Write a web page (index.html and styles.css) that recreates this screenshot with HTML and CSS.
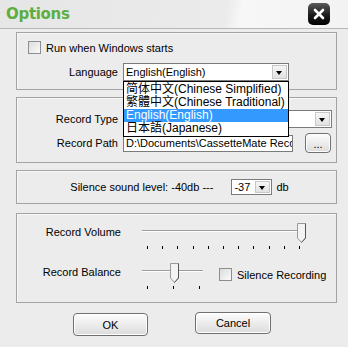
FILE: index.html
```html
<!DOCTYPE html>
<html lang="en">

<head>
  <meta charset="UTF-8">
  <title>Options</title>
  <link rel="stylesheet" href="styles.css">
</head>

<body>
  <div class="window">

    <div class="titlebar">
      <span class="title">Options</span>
      <span class="close">
        <svg width="22" height="22" viewBox="0 0 22 22">
          <path d="M7 7 L15 15 M15 7 L7 15" stroke="#fff" stroke-width="2.6" stroke-linecap="round" />
        </svg>
      </span>
    </div>

    <div class="content">

      <!-- General -->
      <div class="group group-general">
        <div class="check-row">
          <span class="checkbox"></span>
          <span>Run when Windows starts</span>
        </div>
        <div class="field-row lang-row">
          <span class="label">Language</span>
          <div class="combo combo-lang">
            <span class="combo-text">English(English)</span>
            <span class="arrow"></span>
            <ul class="dropdown">
              <li>简体中文(Chinese Simplified)</li>
              <li>繁體中文(Chinese Traditional)</li>
              <li class="selected">English(English)</li>
              <li>日本語(Japanese)</li>
            </ul>
          </div>
        </div>
      </div>

      <!-- Recording -->
      <div class="group group-record">
        <div class="field-row">
          <span class="label">Record Type</span>
          <div class="combo combo-type">
            <span class="arrow"></span>
          </div>
        </div>
        <div class="field-row path-row">
          <span class="label">Record Path</span>
          <div class="path-input"><span>D:\Documents\CassetteMate Recor</span></div>
          <button class="btn btn-browse">...</button>
        </div>
      </div>

      <!-- Silence -->
      <div class="group group-silence">
        <span>Silence sound level: -40db ---</span>
        <div class="combo combo-level">
          <span class="combo-text">-37</span>
          <span class="arrow"></span>
        </div>
        <span>db</span>
      </div>

      <!-- Volume -->
      <div class="group group-volume">
        <div class="slider-row">
          <span class="slider-label">Record Volume</span>
          <div class="slider slider-volume">
            <div class="track"></div>
            <svg class="thumb thumb-volume" width="9" height="20" viewBox="0 0 9 20">
              <path d="M0.5 0.5 H8.5 V15 L4.5 19.5 L0.5 15 Z" fill="#f3f3f3" stroke="#9a9a9a" />
              <path d="M8.5 0.5 V15 L4.5 19.5" fill="none" stroke="#555" />
            </svg>
            <div class="ticks">
              <i></i><i></i><i></i><i></i><i></i><i></i><i></i><i></i><i></i><i></i><i></i>
            </div>
          </div>
        </div>
        <div class="slider-row">
          <span class="slider-label">Record Balance</span>
          <div class="slider slider-balance">
            <div class="track"></div>
            <svg class="thumb thumb-balance" width="9" height="20" viewBox="0 0 9 20">
              <path d="M0.5 0.5 H8.5 V15 L4.5 19.5 L0.5 15 Z" fill="#f3f3f3" stroke="#9a9a9a" />
              <path d="M8.5 0.5 V15 L4.5 19.5" fill="none" stroke="#555" />
            </svg>
            <div class="ticks">
              <i></i><i></i><i></i>
            </div>
          </div>
          <div class="check-row silence-check">
            <span class="checkbox"></span>
            <span>Silence Recording</span>
          </div>
        </div>
      </div>

      <div class="buttons">
        <button class="btn btn-ok">OK</button>
        <button class="btn btn-cancel">Cancel</button>
      </div>

    </div>
  </div>
</body>

</html>
```

FILE: styles.css
```css
body {
  margin: 0;
  padding: 0;
  background-color: #ececec;
  font-family: 'Liberation Sans', Arial, sans-serif;
  font-size: 11px;
  color: #000;
}

.window {
  width: 348px;
  height: 347px;
  overflow: hidden;
}

/* Title bar */
.titlebar {
  height: 28px;
  display: flex;
  align-items: center;
  justify-content: space-between;
  padding: 0 18px 0 6px;
  border-bottom: 1px solid #b8b8b8;
  background: linear-gradient(100deg, #e6e6e6 0, #ebebeb 225px, #f7f7f7 240px, #f3f3f3 100%);
}

.title {
  font-family: 'DejaVu Sans', Verdana, sans-serif;
  font-weight: bold;
  font-size: 15px;
  color: #5cae40;
  letter-spacing: -0.3px;
}

.close {
  width: 22px;
  height: 22px;
  border-radius: 5px;
  background: linear-gradient(#5a5a5a, #1c1c1c 55%, #000);
  display: block;
}

.close svg {
  display: block;
}

.content {
  padding: 3px 11px 0 16px;
}

/* Group boxes */
.group {
  border: 1px solid #a3a3a3;
  box-shadow: inset 1px 1px 0 #f8f8f8;
  box-sizing: border-box;
}

.group + .group {
  margin-top: 7px;
}

.group-general {
  height: 58px;
  padding-top: 8px;
}

.group-record {
  height: 66px;
  padding-top: 12px;
}

.group-silence {
  height: 34px;
  margin-top: 7px;
  display: flex;
  align-items: center;
  justify-content: center;
  gap: 4px;
  padding-left: 6px;
}

.group-volume {
  height: 90px;
  margin-top: 9px !important;
  padding-top: 9px;
}

/* Checkboxes */
.check-row {
  display: flex;
  align-items: center;
  gap: 5px;
  margin-left: 11px;
  height: 13px;
}

.checkbox {
  width: 11px;
  height: 11px;
  border: 1px solid #8e8e8e;
  background: linear-gradient(135deg, #dcdcdc, #fafafa);
}

/* Label + field rows */
.field-row {
  display: flex;
  align-items: center;
}

.label {
  width: 101px;
  padding-right: 5px;
  text-align: right;
}

.lang-row {
  margin-top: 9px;
}

.path-row {
  margin-top: 5px;
  height: 20px;
}

/* Combo boxes */
.combo {
  position: relative;
  height: 18px;
  box-sizing: border-box;
  border: 1px solid #7b7b7b;
  background-color: white;
  display: flex;
  align-items: center;
}

.combo-text {
  padding-left: 2px;
}

.combo-lang {
  width: 166px;
}

.combo-type {
  width: 209px;
}

.combo-level {
  width: 41px;
  height: 16px;
  margin-left: 14px;
  margin-right: 0;
}

.arrow {
  position: absolute;
  right: 1px;
  top: 1px;
  bottom: 1px;
  width: 15px;
  box-sizing: border-box;
  border: 1px solid #c8c8c8;
  background: linear-gradient(#f6f6f6, #e2e2e2);
}

.arrow::after {
  content: '';
  position: absolute;
  left: 3px;
  top: 5px;
  border-left: 3.5px solid transparent;
  border-right: 3.5px solid transparent;
  border-top: 4px solid #000;
}

.combo-level .arrow::after {
  top: 4px;
}

/* Open language list */
.dropdown {
  position: absolute;
  left: -1px;
  top: 17px;
  width: 166px;
  box-sizing: border-box;
  margin: 0;
  padding: 1px 0 1px;
  list-style: none;
  border: 1px solid #000;
  background-color: white;
  font-family: 'Liberation Sans', 'Noto Sans CJK SC', sans-serif;
  font-size: 12px;
  z-index: 2;
}

.dropdown li {
  height: 13px;
  line-height: 13px;
  padding-left: 2px;
  white-space: nowrap;
}

.dropdown li.selected {
  background-color: #3399ff;
  color: white;
}

/* Path */
.path-input {
  width: 170px;
  height: 17px;
  box-sizing: border-box;
  border: 1px solid #7b7b7b;
  background-color: white;
  padding-left: 2px;
  line-height: 15px;
  white-space: nowrap;
  overflow: hidden;
}

/* Buttons */
.btn {
  font-family: 'Liberation Sans', Arial, sans-serif;
  font-size: 11px;
  color: #000;
  border: 1px solid #707070;
  border-radius: 4px;
  background: linear-gradient(#fdfdfd, #ececec 50%, #dcdcdc);
  box-shadow: inset 0 0 0 1px #fff;
  padding: 0;
  cursor: pointer;
}

.btn-browse {
  width: 26px;
  height: 20px;
  margin-left: 12px;
  line-height: 20px;
}

.buttons {
  display: flex;
  align-items: flex-start;
  gap: 47px;
  padding-left: 57px;
  margin-top: 9px;
}

.btn-ok {
  width: 75px;
  height: 23px;
  margin-top: 1px;
}

.btn-cancel {
  width: 76px;
  height: 22px;
}

/* Sliders */
.slider-row {
  display: flex;
  align-items: flex-start;
  height: 27px;
}

.slider-row + .slider-row {
  margin-top: 13px;
}

.slider-label {
  width: 104px;
  text-align: right;
  margin-top: 3px;
  margin-right: 21px;
}

.slider {
  position: relative;
  height: 27px;
}

.slider-volume {
  width: 163px;
}

.slider-balance {
  width: 63px;
}

.track {
  position: absolute;
  left: 0;
  right: 2px;
  top: 7px;
  border-top: 1px solid #9c9c9c;
  border-bottom: 1px solid #fff;
}

.thumb {
  position: absolute;
  top: 0;
}

.thumb-volume {
  left: 155px;
}

.thumb-balance {
  left: 28px;
}

.ticks {
  position: absolute;
  left: 5px;
  right: 5px;
  top: 23px;
  display: flex;
  justify-content: space-between;
}

.ticks i {
  width: 1px;
  height: 3px;
  background-color: #000;
}

.silence-check {
  margin-left: 14px;
  margin-top: 5px;
}
```
